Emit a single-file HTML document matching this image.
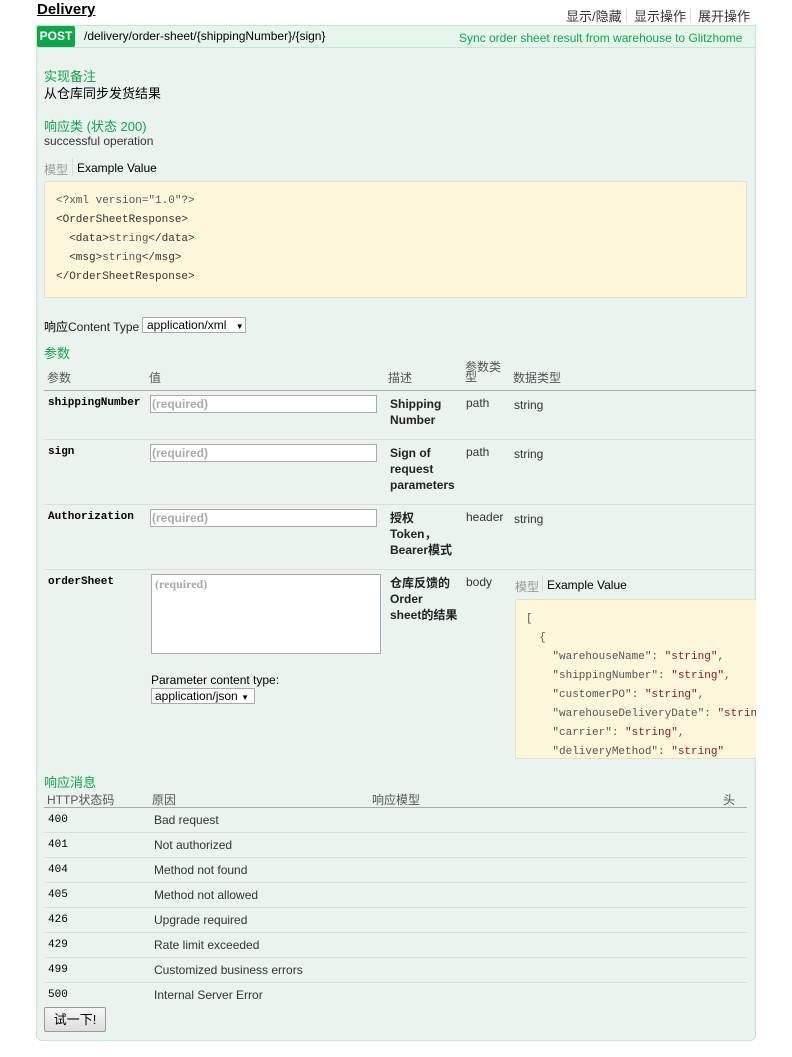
<!DOCTYPE html>
<html><head><meta charset="utf-8"><style>
*{margin:0;padding:0;box-sizing:border-box}
body{width:792px;height:1057px;background:#fff;position:relative;overflow:hidden;font-family:"Liberation Sans","Noto Sans CJK SC",sans-serif;font-size:12px;color:#333}
.a{position:absolute;white-space:nowrap}
.g{color:#10a54a}
.m{font-family:"Liberation Mono","Noto Sans CJK SC",monospace;font-size:11px}
.b{font-weight:bold}
.inp{position:absolute;background:#fff;border:1px solid #aaa;height:18px;width:227px;color:#aaa;font-size:12px;padding-left:1px;line-height:16px;font-weight:bold}
.hl{position:absolute;height:1px;background:#ddd}
.code{position:absolute;background:#fcf6db;border:1px solid #e5e0c6;font-family:"Liberation Mono",monospace;font-size:11px;line-height:19px;color:#555;overflow:hidden}
.tag{color:#333}
.s{color:#8b1a1a}
</style></head><body>
<div class="a b" style="left:37px;top:1px;font-size:15px;color:#000;text-decoration:underline">Delivery</div>
<div class="a" style="left:566px;top:6px;font-size:13px;color:#333">显示/隐藏</div>
<div class="a" style="left:626px;top:8px;width:1px;height:14px;background:#ddd"></div>
<div class="a" style="left:634px;top:6px;font-size:13px;color:#333">显示操作</div>
<div class="a" style="left:690px;top:8px;width:1px;height:14px;background:#ddd"></div>
<div class="a" style="left:698px;top:6px;font-size:13px;color:#333">展开操作</div>

<div class="a" style="left:36px;top:25px;width:720px;height:1016px;background:#ebf3ee;border:1px solid #c3e8d1;border-radius:0 0 6px 6px"></div>
<div class="a" style="left:36px;top:25px;width:720px;height:23px;background:#e7f6ec;border:1px solid #c3e8d1"></div>
<div class="a b" style="left:37px;top:26px;width:38px;height:21px;background:#10a54a;color:#fff;font-size:12px;line-height:21px;text-align:center;border-radius:2px">POST</div>
<div class="a" style="left:84px;top:29px;font-size:12px;color:#000">/delivery/order-sheet/{shippingNumber}/{sign}</div>
<div class="a g" style="left:459px;top:31px;font-size:12px">Sync order sheet result from warehouse to Glitzhome</div>

<div class="a g" style="left:44px;top:66px;font-size:13px">实现备注</div>
<div class="a" style="left:44px;top:83px;font-size:13px;color:#000">从仓库同步发货结果</div>
<div class="a g" style="left:44px;top:116px;font-size:13px">响应类 (状态 200)</div>
<div class="a" style="left:44px;top:134px;color:#333">successful operation</div>
<div class="a" style="left:44px;top:161px;color:#999">模型</div>
<div class="a" style="left:72px;top:158px;width:1px;height:18px;background:#ddd"></div>
<div class="a" style="left:77px;top:161px;color:#000">Example Value</div>
<div class="code" style="left:44px;top:181px;width:703px;height:117px;padding:10px 0 0 11px">&lt;?xml version="1.0"?&gt;<br><span class="tag">&lt;OrderSheetResponse&gt;</span><br>&nbsp;&nbsp;<span class="tag">&lt;data&gt;</span>string<span class="tag">&lt;/data&gt;</span><br>&nbsp;&nbsp;<span class="tag">&lt;msg&gt;</span>string<span class="tag">&lt;/msg&gt;</span><br><span class="tag">&lt;/OrderSheetResponse&gt;</span></div>

<div class="a" style="left:44px;top:318px;color:#000">响应<span style="color:#222">Content Type</span></div>
<div class="a" style="left:142px;top:317px;width:104px;height:16px;background:#fff;border:1px solid #aaa;font-size:12px;line-height:14px;padding-left:4px;color:#000">application/xml <span style="font-size:8px;margin-left:6px">▼</span></div>
<div class="a g" style="left:44px;top:343px;font-size:13px">参数</div>

<div class="a" style="left:47px;top:369px;color:#555">参数</div>
<div class="a" style="left:149px;top:369px;color:#555">值</div>
<div class="a" style="left:388px;top:369px;color:#555">描述</div>
<div class="a" style="left:465px;top:362px;color:#555;line-height:10px;white-space:normal;width:40px">参数类<br>型</div>
<div class="a" style="left:513px;top:369px;color:#555">数据类型</div>
<div class="a" style="left:44px;top:390px;width:712px;height:1px;background:#aaa"></div>

<div class="a m b" style="left:48px;top:397px;color:#000">shippingNumber</div>
<div class="inp" style="left:150px;top:395px">(required)</div>
<div class="a b" style="left:390px;top:396px;color:#222;line-height:16px">Shipping<br>Number</div>
<div class="a" style="left:466px;top:396px">path</div>
<div class="a" style="left:514px;top:398px">string</div>
<div class="hl" style="left:44px;top:439px;width:712px"></div>

<div class="a m b" style="left:48px;top:446px;color:#000">sign</div>
<div class="inp" style="left:150px;top:444px">(required)</div>
<div class="a b" style="left:390px;top:445px;color:#222;line-height:16px">Sign of<br>request<br>parameters</div>
<div class="a" style="left:466px;top:445px">path</div>
<div class="a" style="left:514px;top:447px">string</div>
<div class="hl" style="left:44px;top:504px;width:712px"></div>

<div class="a m b" style="left:48px;top:511px;color:#000">Authorization</div>
<div class="inp" style="left:150px;top:509px">(required)</div>
<div class="a b" style="left:390px;top:510px;color:#222;line-height:16px">授权<br>Token，<br>Bearer模式</div>
<div class="a" style="left:466px;top:510px">header</div>
<div class="a" style="left:514px;top:512px">string</div>
<div class="hl" style="left:44px;top:569px;width:712px"></div>

<div class="a m b" style="left:48px;top:576px;color:#000">orderSheet</div>
<div class="a" style="left:151px;top:574px;width:230px;height:80px;background:#fff;border:1px solid #aaa;font-family:'Liberation Serif',serif;color:#aaa;font-weight:bold;padding:2px 3px">(required)</div>
<div class="a" style="left:151px;top:673px;color:#000">Parameter content type:</div>
<div class="a" style="left:151px;top:688px;width:104px;height:16px;background:#fff;border:1px solid #aaa;font-size:12px;line-height:14px;padding-left:3px;color:#000">application/json <span style="font-size:8px">▼</span></div>
<div class="a b" style="left:390px;top:575px;color:#222;line-height:16px">仓库反馈的<br>Order<br>sheet的结果</div>
<div class="a" style="left:466px;top:575px">body</div>
<div class="a" style="left:515px;top:578px;color:#999">模型</div>
<div class="a" style="left:542px;top:575px;width:1px;height:18px;background:#ddd"></div>
<div class="a" style="left:547px;top:578px;color:#000">Example Value</div>
<div class="code" style="left:515px;top:599px;width:241px;height:160px;padding:10px 0 0 10px;border-right:none;white-space:pre">[
  {
    "warehouseName": <span class="s">"string"</span>,
    "shippingNumber": <span class="s">"string"</span>,
    "customerPO": <span class="s">"string"</span>,
    "warehouseDeliveryDate": <span class="s">"string"</span>,
    "carrier": <span class="s">"string"</span>,
    "deliveryMethod": <span class="s">"string"</span></div>

<div class="a g" style="left:44px;top:772px;font-size:13px">响应消息</div>
<div class="a" style="left:47px;top:791px;color:#555">HTTP状态码</div>
<div class="a" style="left:152px;top:791px;color:#555">原因</div>
<div class="a" style="left:372px;top:791px;color:#555">响应模型</div>
<div class="a" style="left:723px;top:791px;color:#555">头</div>
<div class="a" style="left:44px;top:807px;width:703px;height:1px;background:#aaa"></div>

<div class="a m" style="left:48px;top:814px;color:#000">400</div><div class="a" style="left:154px;top:813px">Bad request</div>
<div class="hl" style="left:44px;top:832px;width:703px"></div>
<div class="a m" style="left:48px;top:839px;color:#000">401</div><div class="a" style="left:154px;top:838px">Not authorized</div>
<div class="hl" style="left:44px;top:857px;width:703px"></div>
<div class="a m" style="left:48px;top:864px;color:#000">404</div><div class="a" style="left:154px;top:863px">Method not found</div>
<div class="hl" style="left:44px;top:882px;width:703px"></div>
<div class="a m" style="left:48px;top:889px;color:#000">405</div><div class="a" style="left:154px;top:888px">Method not allowed</div>
<div class="hl" style="left:44px;top:907px;width:703px"></div>
<div class="a m" style="left:48px;top:914px;color:#000">426</div><div class="a" style="left:154px;top:913px">Upgrade required</div>
<div class="hl" style="left:44px;top:932px;width:703px"></div>
<div class="a m" style="left:48px;top:939px;color:#000">429</div><div class="a" style="left:154px;top:938px">Rate limit exceeded</div>
<div class="hl" style="left:44px;top:957px;width:703px"></div>
<div class="a m" style="left:48px;top:964px;color:#000">499</div><div class="a" style="left:154px;top:963px">Customized business errors</div>
<div class="hl" style="left:44px;top:982px;width:703px"></div>
<div class="a m" style="left:48px;top:989px;color:#000">500</div><div class="a" style="left:154px;top:988px">Internal Server Error</div>

<div class="a" style="left:44px;top:1007px;width:62px;height:25px;background:linear-gradient(#f6f6f6,#dedede);border:1px solid #999;border-radius:2px;color:#000;font-size:13px;line-height:23px;text-align:center">试一下!</div>
</body></html>
